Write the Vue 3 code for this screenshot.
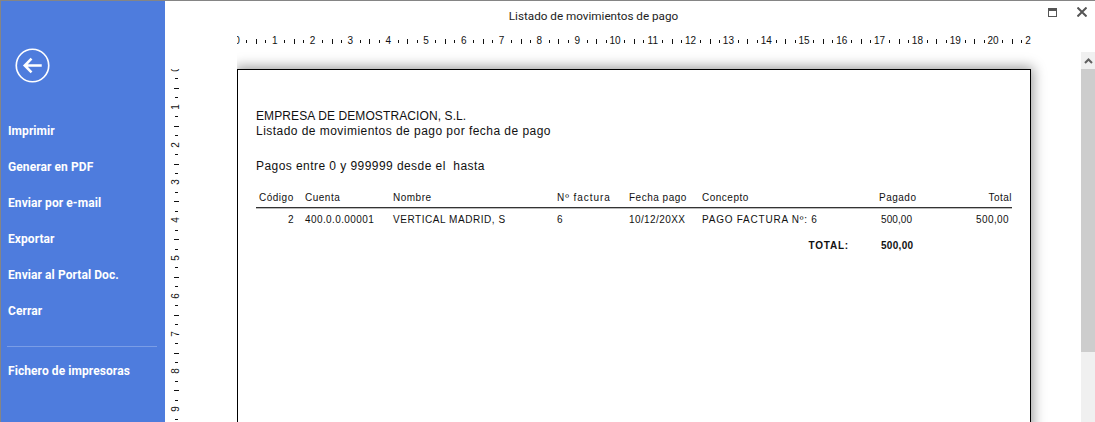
<template>
  <div class="window">
    <aside class="side">
      <button class="back" aria-label="Volver">
        <svg width="35" height="35" viewBox="0 0 36 36" fill="none" stroke="#fff">
          <circle cx="18" cy="18" r="16.7" stroke-width="1.7" />
          <path d="M10 18h17.5M17 11l-7 7 7 7" stroke-width="2.6" />
        </svg>
      </button>
      <nav class="menu">
        <a v-for="item in menu" :key="item" class="menu-item">{{ item }}</a>
      </nav>
      <div class="sep"></div>
      <a class="menu-item">Fichero de impresoras</a>
    </aside>

    <main class="main">
      <header class="title">
        <span class="title-text">Listado de movimientos de pago</span>
        <div class="win-btns">
          <svg width="9" height="9" viewBox="0 0 9 9" fill="none" stroke="#555">
            <rect x="0.5" y="0.5" width="8" height="8" />
            <path d="M0 2h9" stroke-width="2" />
          </svg>
          <svg width="10" height="10" viewBox="0 0 10 10" fill="none" stroke="#555" stroke-width="2">
            <path d="M0.5 0.5l9 9M9.5 0.5l-9 9" />
          </svg>
        </div>
      </header>

      <div class="h-ruler">
        <div class="h-inner">
          <template v-for="t in ticks" :key="t.i">
            <span v-if="t.label !== null" class="h-num" :style="{ left: t.pos + 'px' }">{{ t.label }}</span>
            <span v-else class="h-tick" :class="{ long: t.long }" :style="{ left: t.pos + 'px' }"></span>
          </template>
        </div>
      </div>

      <div class="body">
        <div class="v-ruler">
          <div class="v-inner">
            <template v-for="t in ticks" :key="t.i">
              <span v-if="t.label !== null" class="v-num" :style="{ top: t.pos + 'px' }">{{ t.label }}</span>
              <span v-else class="v-tick" :class="{ long: t.long }" :style="{ top: t.pos + 'px' }"></span>
            </template>
          </div>
        </div>

        <div class="canvas">
          <section class="sheet">
            <div class="head">EMPRESA DE DEMOSTRACION, S.L.</div>
            <div class="head sub">Listado de movimientos de pago por fecha de pago</div>
            <div class="head range">Pagos entre 0 y 999999 desde el&nbsp; hasta</div>

            <div class="row cols-head">
              <span class="c-code">Código</span>
              <span class="c-acc">Cuenta</span>
              <span class="c-name">Nombre</span>
              <span class="c-inv wide">Nº factura</span>
              <span class="c-date">Fecha pago</span>
              <span class="c-con">Concepto</span>
              <span class="c-paid">Pagado</span>
              <span class="c-total">Total</span>
            </div>
            <div class="row cols-data">
              <span class="c-code num">2</span>
              <span class="c-acc">400.0.0.00001</span>
              <span class="c-name caps">VERTICAL MADRID, S</span>
              <span class="c-inv">6</span>
              <span class="c-date">10/12/20XX</span>
              <span class="c-con caps wide">PAGO FACTURA Nº: 6</span>
              <span class="c-paid val">500,00</span>
              <span class="c-total num">500,00</span>
            </div>
            <div class="row totals">
              <span class="total-label">TOTAL:</span>
              <span class="c-paid val">500,00</span>
            </div>
          </section>
        </div>

        <div class="scroll">
          <div class="scroll-btn">
            <svg width="9" height="6" viewBox="0 0 9 6" fill="none" stroke="#606060" stroke-width="2">
              <path d="M1 5l3.5-3.5L8 5" />
            </svg>
          </div>
          <div class="thumb"></div>
        </div>
      </div>
    </main>
  </div>
</template>

<script setup>
defineOptions({ name: 'ReportPreview' })

const menu = ['Imprimir', 'Generar en PDF', 'Enviar por e-mail', 'Exportar', 'Enviar al Portal Doc.', 'Cerrar']

// cm ruler: 4 subdivisions per cm, number on each whole cm
const CM = 37.8
const ticks = []
for (let i = 0; i < 85; i++) {
  ticks.push({
    i,
    pos: (i * CM) / 4,
    label: i % 4 === 0 ? i / 4 : null,
    long: i % 4 === 2,
  })
}
</script>

<style>
html, body {
  margin: 0;
  overflow: hidden;
  background: #fff;
}
</style>

<style scoped>
.window {
  display: flex;
  width: 1095px;
  height: 422px;
  box-sizing: border-box;
  border-top: 1px solid #858585;
  border-left: 1px solid #858585;
  background: #fff;
  overflow: hidden;
  font-family: "Liberation Sans", Arial, sans-serif;
}

.side {
  width: 164px;
  flex: none;
  background: #4e7cdd;
  color: #fff;
  display: flex;
  flex-direction: column;
  padding-left: 7px;
  box-sizing: border-box;
}
.back {
  all: unset;
  display: block;
  margin: 47px 0 0 7px;
  height: 36px;
}
.menu {
  margin-top: 29px;
  display: flex;
  flex-direction: column;
}
.menu-item {
  display: block;
  height: 36px;
  line-height: 36px;
  font-family: Roboto, sans-serif;
  font-size: 12px;
  font-weight: 700;
  letter-spacing: 0.08px;
  white-space: nowrap;
}
.sep {
  height: 1px;
  width: 150px;
  background: #7a9de6;
  margin: 17px 0 6px -1px;
}

.main {
  flex: 1;
  min-width: 0;
  display: flex;
  flex-direction: column;
}
.title {
  height: 29px;
  flex: none;
  position: relative;
  box-sizing: border-box;
  text-align: center;
  line-height: 31px;
  font-family: Roboto, sans-serif;
  font-size: 11.7px;
  color: #222;
  padding-right: 73px;
}
.win-btns {
  position: absolute;
  right: 8px;
  top: 6px;
  display: flex;
  gap: 20px;
  align-items: center;
}

.h-ruler {
  height: 22px;
  flex: none;
  padding-left: 72px;
}
.h-inner {
  position: relative;
  width: 794px;
  height: 22px;
  overflow: hidden;
}
.h-tick {
  position: absolute;
  top: 10px;
  width: 1px;
  height: 3px;
  background: #111;
}
.h-tick.long {
  top: 9px;
  height: 5px;
}
.h-num {
  position: absolute;
  top: 5px;
  width: 14px;
  margin-left: -7px;
  text-align: center;
  font-size: 10px;
  line-height: 12px;
  color: #111;
}

.body {
  flex: 1;
  min-height: 0;
  display: flex;
}
.v-ruler {
  width: 72px;
  flex: none;
  padding-top: 17px;
  box-sizing: border-box;
}
.v-inner {
  position: relative;
  height: 370px;
  overflow: hidden;
}
.v-tick {
  position: absolute;
  left: 10px;
  width: 3px;
  height: 1px;
  background: #111;
}
.v-tick.long {
  left: 9px;
  width: 5px;
}
.v-num {
  position: absolute;
  left: 4px;
  width: 14px;
  margin-top: -6px;
  height: 12px;
  text-align: center;
  font-size: 10px;
  line-height: 12px;
  color: #111;
  transform: rotate(-90deg);
}

.canvas {
  flex: 1;
  min-width: 0;
  overflow: hidden;
  padding-top: 17px;
}
.sheet {
  width: 794px;
  height: 500px;
  box-sizing: border-box;
  border: 1px solid #000;
  padding: 39px 18px 0 18px;
  background: #fff;
  box-shadow: 0 0 12px 2px rgba(0, 0, 0, 0.4);
  color: #111;
}
.head {
  font-size: 12px;
  line-height: 14px;
  white-space: nowrap;
  letter-spacing: 0.1px;
}
.sub {
  margin-top: 1px;
  letter-spacing: 0.46px;
}
.range {
  margin-top: 21px;
  letter-spacing: 0.44px;
}

.row {
  display: flex;
  font-size: 10px;
  line-height: 12px;
  white-space: nowrap;
}
.row span {
  flex: none;
  box-sizing: border-box;
}
.cols-head {
  margin-top: 19px;
  height: 15px;
  align-items: flex-start;
  border-bottom: 1px solid #333;
  box-shadow: 0 1px 0 #bbb;
  letter-spacing: 0.5px;
}
.cols-data {
  margin-top: 6px;
  letter-spacing: 0.4px;
}
.totals {
  margin-top: 14px;
  font-weight: 700;
  letter-spacing: 0.5px;
}
.caps { letter-spacing: 0.55px; }
.cols-head .wide { letter-spacing: 0.95px; }
.cols-data .wide { letter-spacing: 0.77px; }
.cols-data .val { letter-spacing: 0.1px; }
.totals .val { letter-spacing: 0.3px; }
.c-code { width: 49px; padding-left: 3px; }
.c-code.num { text-align: right; padding-right: 11px; }
.c-acc { width: 88px; }
.c-name { width: 164px; }
.c-inv { width: 72px; }
.c-date { width: 73px; }
.c-con { width: 177px; }
.c-paid { width: 60px; }
.c-paid.val { padding-left: 2px; }
.c-total { width: 73px; text-align: right; }
.c-total.num { padding-right: 3px; }
.total-label { width: 623px; text-align: right; padding-right: 30px; letter-spacing: 0.8px; }

.scroll {
  width: 14px;
  flex: none;
  background: #f0f0f0;
  display: flex;
  flex-direction: column;
}
.scroll-btn {
  height: 17px;
  display: flex;
  align-items: center;
  justify-content: center;
}
.thumb {
  height: 283px;
  background: #cdcdcd;
}
</style>
